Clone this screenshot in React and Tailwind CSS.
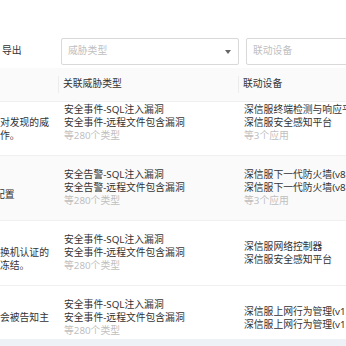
import React from 'react';

const rows = [
  {
    name: '高危事件自动处置',
    desc: '检测到安全事件后将自动联动设备对发现的威胁源进行阻断隔离等一系列处置操作。',
    threats: ['安全事件-SQL注入漏洞', '安全事件-远程文件包含漏洞'],
    threatMore: '等280个类型',
    devices: ['深信服终端检测与响应平台', '深信服安全感知平台'],
    deviceMore: '等3个应用',
  },
  {
    name: '攻击源封禁',
    desc: '向IPS设备自动下发攻击源的封禁配置',
    threats: ['安全告警-SQL注入漏洞', '安全告警-远程文件包含漏洞'],
    threatMore: '等280个类型',
    devices: ['深信服下一代防火墙(v8.0.45)', '深信服下一代防火墙(v8.0.48)'],
    deviceMore: '等3个应用',
  },
  {
    name: '失陷主机隔离',
    desc: '发现失陷主机后将自动联动网络交换机认证的准入系统对该终端进行下线与账号冻结。',
    threats: ['安全事件-SQL注入漏洞', '安全事件-远程文件包含漏洞'],
    threatMore: '等280个类型',
    devices: ['深信服网络控制器', '深信服安全感知平台'],
    deviceMore: null,
  },
  {
    name: '异常外联告警',
    desc: '检测到异常外联行为时终端用户将会被告知主机负责人。',
    threats: ['安全事件-SQL注入漏洞', '安全事件-远程文件包含漏洞'],
    threatMore: '等280个类型',
    devices: ['深信服上网行为管理(v12.0.80)', '深信服上网行为管理(v13.0.36)'],
    deviceMore: null,
  },
];

const Lines = ({ items, more }) => (
  <div className="flex flex-col whitespace-nowrap">
    {items.map((t) => (
      <div key={t} className="leading-[13px] text-[#333]">{t}</div>
    ))}
    {more && <div className="leading-[13px] text-[#bfbfbf]">{more}</div>}
  </div>
);

export default function App() {
  return (
    <div className="w-[346px] h-[346px] overflow-hidden bg-white flex flex-col text-[9.8px] font-['Noto_Sans','Noto_Sans_CJK_SC',sans-serif]">
      {/* Toolbar */}
      <div className="h-[68px] shrink-0 flex items-start pt-[38px]">
        <div className="w-[61px] shrink-0 h-[27px] flex items-center pl-[2px] text-[#333]">导出</div>
        <div className="w-[178px] shrink-0 h-[27px] border border-[#d9d9d9] rounded-[2px] flex items-center justify-between pl-[6px] pr-[7px]">
          <span className="text-[#bfbfbf]">威胁类型</span>
          <svg width="6" height="4" viewBox="0 0 6 4">
            <polygon points="0,0 6,0 3,4" fill="#666" />
          </svg>
        </div>
        <div className="w-[200px] shrink-0 ml-[7px] h-[27px] border border-[#d9d9d9] rounded-[2px] flex items-center pl-[6px]">
          <span className="text-[#bfbfbf]">联动设备</span>
        </div>
      </div>

      {/* Table (scrolled horizontally) */}
      <div className="flex-1 flex flex-col ml-[-153px] w-[620px] min-h-0">
        <div className="h-[34px] shrink-0 bg-[#fafafa] border-b border-[#f0f0f0] flex items-center text-[#333]">
          <div className="w-[211px] shrink-0 px-[6px]">策略描述</div>
          <div className="w-[180px] shrink-0 relative pl-[5px] h-full flex items-center">
            <span className="absolute left-0 top-[8px] bottom-[8px] w-px bg-[#ececec]" />
            关联威胁类型
          </div>
          <div className="w-[220px] shrink-0 relative pl-[5px] h-full flex items-center">
            <span className="absolute left-0 top-[8px] bottom-[8px] w-px bg-[#ececec]" />
            联动设备
          </div>
        </div>

        <div className="flex-1 min-h-0 overflow-hidden">
          <div className="mt-[-11.5px]">
            {rows.map((r, i) => (
              <div
                key={r.name}
                className={`h-[65px] flex items-center border-b border-[#f0f0f0] ${i === 1 ? 'bg-[#fafafa]' : 'bg-white'}`}
              >
                <div className="w-[211px] shrink-0 px-[6px] leading-[13px] text-[#333]">
                  <div className="font-medium">{r.name}</div>
                  <div>{r.desc}</div>
                </div>
                <div className="w-[180px] shrink-0 pl-[6px]">
                  <Lines items={r.threats} more={r.threatMore} />
                </div>
                <div className="w-[220px] shrink-0 pl-[6px]">
                  <Lines items={r.devices} more={r.deviceMore} />
                </div>
              </div>
            ))}
          </div>
        </div>
      </div>

      <div className="h-[7px] shrink-0 bg-[#eef1f5]" />
    </div>
  );
}
